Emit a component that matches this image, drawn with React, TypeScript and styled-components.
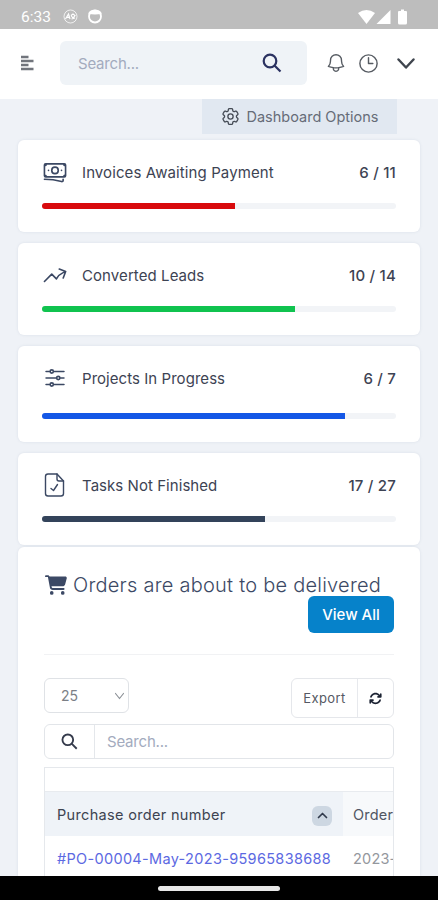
import React from "react";
import styled, { createGlobalStyle } from "styled-components";
import {
  HiOutlineBanknotes,
  HiOutlineArrowTrendingUp,
  HiOutlineAdjustmentsHorizontal,
  HiOutlineBell,
  HiOutlineClock,
  HiOutlineCog6Tooth,
} from "react-icons/hi2";
import { FaCartShopping, FaArrowsRotate } from "react-icons/fa6";

const GlobalStyle = createGlobalStyle`
  * { box-sizing: border-box; }
  body { margin: 0; background: #eff2f7; font-family: Inter, "Liberation Sans", sans-serif; }
  button, input { font-family: inherit; }
`;

const Screen = styled.div`
  width: 438px;
  height: 900px;
  overflow: hidden;
  display: flex;
  flex-direction: column;
  background: #eff2f7;
`;

const StatusBar = styled.div`
  height: 29px;
  flex: none;
  display: flex;
  align-items: center;
  padding: 4px 30px 0 21px;
  background: #bdbdbd;
  color: #fff;
`;

const Time = styled.span`
  font: 400 15.5px/20px Roboto, sans-serif;
  width: 42px;
`;

const StatusIcons = styled.div<{ $right?: boolean }>`
  display: flex;
  align-items: center;
  gap: ${(p) => (p.$right ? "0" : "9px")};
  margin-left: ${(p) => (p.$right ? "auto" : "0")};
  svg { display: block; }
`;

const Header = styled.header`
  height: 70px;
  flex: none;
  display: flex;
  align-items: center;
  padding: 0 23px 2px 20px;
  background: #fff;
  color: #565b62;
  svg { display: block; flex: none; }
`;

const HeaderSearch = styled.label`
  width: 247px;
  height: 44px;
  margin: 0 18px 0 26px;
  padding: 0 25px 0 18px;
  display: flex;
  align-items: center;
  border-radius: 6px;
  background: #eff3f7;
  color: #2b3261;
`;

const SearchInput = styled.input`
  flex: 1;
  min-width: 0;
  padding: 0;
  border: 0;
  outline: 0;
  background: transparent;
  font-size: 15px;
  letter-spacing: -0.2px;
  &::placeholder { color: #a3abbe; opacity: 1; }
`;

const HeaderActions = styled.div`
  display: flex;
  align-items: center;
  flex: 1;
  gap: 10px;
  svg:last-child { margin-left: auto; }
`;

const OptionsButton = styled.button`
  width: 195px;
  height: 35px;
  flex: none;
  align-self: flex-end;
  margin: 0 41px 6px 0;
  padding: 0;
  border: 0;
  display: flex;
  align-items: center;
  justify-content: center;
  gap: 5px;
  background: #e1e8f1;
  color: #666c78;
  font-size: 14.5px;
  letter-spacing: 0;
  svg { color: #454b55; }
`;

const Stats = styled.div`
  display: flex;
  flex-direction: column;
  gap: 11px;
  padding: 0 18px;
`;

const surface = `
  background: #fff;
  border-radius: 6px;
  box-shadow: 0 0 3px rgba(100, 116, 139, 0.14);
`;

const StatCard = styled.section<{ $tall?: boolean }>`
  ${surface}
  height: ${(p) => (p.$tall ? 96 : 92)}px;
  padding: 19px 24px 23px;
  display: flex;
  flex-direction: column;
  justify-content: space-between;
`;

const StatHead = styled.div`
  display: flex;
  align-items: center;
  height: 26px;
  color: #3d4353;
  font-size: 15px;
  svg { flex: none; display: block; color: #3b4863; }
`;

const StatLabel = styled.span<{ $spacing: number }>`
  margin-left: 14px;
  flex: 1;
  white-space: nowrap;
  letter-spacing: ${(p) => p.$spacing}px;
`;

const StatValue = styled.span`
  font-weight: 500;
  letter-spacing: 0.2px;
  font-size: 15px;
`;

const Track = styled.div`
  height: 6px;
  border-radius: 3px;
  overflow: hidden;
  background: #f2f4f7;
`;

const Fill = styled.div<{ $color: string }>`
  height: 100%;
  background: ${(p) => p.$color};
`;

const Panel = styled.section`
  ${surface}
  flex: 1;
  min-height: 0;
  overflow: hidden;
  margin: 2px 18px 0 18px;
  padding: 25px 26px 0 26px;
  border-radius: 6px 6px 0 0;
`;

const Title = styled.h2`
  height: 25px;
  margin: 0 0 0 1px;
  display: flex;
  align-items: center;
  gap: 6px;
  white-space: nowrap;
  color: #3c4965;
  font-size: 20px;
  font-weight: 300;
  letter-spacing: 0.24px;
`;

const TitleAction = styled.div`
  display: flex;
  justify-content: flex-end;
  height: 58px;
  border-bottom: 1px solid #f1f2f4;
`;

const PrimaryButton = styled.button`
  width: 86px;
  height: 37px;
  margin-top: -1px;
  padding: 0;
  border: 0;
  border-radius: 6px;
  background: #0682ca;
  color: #fff;
  font-size: 15px;
  font-weight: 500;
`;

const Controls = styled.div`
  display: flex;
  justify-content: space-between;
  align-items: flex-start;
  margin-top: 23px;
`;

const PageSize = styled.button`
  width: 85px;
  height: 35px;
  padding: 0 3px 0 16px;
  display: flex;
  align-items: center;
  justify-content: space-between;
  border: 1px solid #dfe2e6;
  border-radius: 6px;
  background: #fff;
  color: #7b7f86;
  font-size: 14px;
`;

const ButtonGroup = styled.div`
  width: 103px;
  height: 40px;
  display: flex;
  border: 1px solid #e5e7eb;
  border-radius: 6px;
`;

const GroupButton = styled.button<{ $divided?: boolean }>`
  flex: ${(p) => (p.$divided ? "0 0 36px" : "1")};
  padding: 0;
  display: flex;
  align-items: center;
  justify-content: center;
  border: 0;
  border-left: ${(p) => (p.$divided ? "1px solid #e7e9ed" : "0")};
  background: transparent;
  color: ${(p) => (p.$divided ? "#1c2333" : "#555963")};
  font-size: 13px;
  letter-spacing: 0.4px;
`;

const TableSearch = styled.label`
  height: 35px;
  margin-top: 6px;
  display: flex;
  align-items: center;
  border: 1px solid #e2e5e9;
  border-radius: 6px;
  color: #353b4c;
  overflow: hidden;
`;

const SearchAddon = styled.span`
  width: 50px;
  height: 100%;
  margin-right: 12px;
  display: flex;
  align-items: center;
  justify-content: center;
  border-right: 1px solid #e4e7eb;
`;

const Table = styled.div`
  width: 350px;
  margin-top: 8px;
  border: 1px solid #e5e8ec;
  overflow: hidden;
`;

const Row = styled.div<{ $head?: boolean }>`
  display: grid;
  grid-template-columns: 298px 50px;
  height: 45px;
  border-top: ${(p) => (p.$head ? "1px solid #e8ebef" : "0")};
  margin-top: ${(p) => (p.$head ? "23px" : "0")};
`;

const Cell = styled.div<{ $tone: "sorted" | "head" | "link" | "plain" }>`
  display: flex;
  align-items: center;
  justify-content: space-between;
  overflow: hidden;
  padding: 0 ${(p) => (p.$tone === "link" || p.$tone === "sorted" ? 11 : 0)}px 0 ${(p) => (p.$tone === "link" || p.$tone === "sorted" ? 12 : 10)}px;
  white-space: nowrap;
  background: ${(p) => ({ sorted: "#eff3f8", head: "#f7f9fb", link: "#fff", plain: "#fff" })[p.$tone]};
  color: ${(p) => ({ sorted: "#3d4351", head: "#505662", link: "#5c69e2", plain: "#94979d" })[p.$tone]};
  font-size: 14.5px;
  letter-spacing: ${(p) => (p.$tone === "link" ? 0.32 : p.$tone === "sorted" ? 0.33 : 0.2)}px;
`;

const SortBadge = styled.span`
  width: 20px;
  height: 20px;
  display: flex;
  align-items: center;
  justify-content: center;
  border-radius: 6px;
  background: #cdd7e2;
  margin-top: 3px;
`;

const NavBar = styled.div`
  height: 24px;
  flex: none;
  display: flex;
  justify-content: center;
  align-items: center;
  background: #000;
`;

const HomeHandle = styled.div`
  width: 122px;
  height: 5px;
  border-radius: 3px;
  background: #e8e8e8;
`;

const Chevron = ({ w, h, stroke, color, up }: { w: number; h: number; stroke: number; color: string; up?: boolean }) => (
  <svg width={w} height={h} viewBox={`0 0 ${w} ${h}`} fill="none" stroke={color} strokeWidth={stroke} strokeLinecap="round" strokeLinejoin="round">
    <path d={up ? `M1.5 ${h - 1.5}L${w / 2} 1.5L${w - 1.5} ${h - 1.5}` : `M1.5 1.5L${w / 2} ${h - 1.5}L${w - 1.5} 1.5`} />
  </svg>
);

const SearchIcon = ({ size, stroke }: { size: number; stroke: number }) => (
  <svg width={size} height={size} viewBox="0 0 20 20" fill="none" stroke="currentColor" strokeWidth={stroke}>
    <circle cx="8" cy="8" r="6.3" />
    <path d="M12.5 12.5L18.500 18.500" />
  </svg>
);

const DocumentCheck = () => (
  <svg width="26" height="26" viewBox="0 0 26 26" fill="none" stroke="currentColor" strokeWidth="1.4" strokeLinejoin="round" strokeLinecap="round">
    <path d="M15 2H6Q3.500 2 3.500 4.500V21.500Q3.500 24 6 24H19Q21.500 24 21.500 21.500V9Z" />
    <path d="M15 2V7Q15 9 17 9H21.500M9 16.500L11.500 18.500L15.500 12.500" />
  </svg>
);

const stats = [
  { label: "Invoices Awaiting Payment", spacing: 0.1, done: 6, total: 11, color: "#d80a0d", icon: <HiOutlineBanknotes size={26} /> },
  { label: "Converted Leads", spacing: 0.08, done: 10, total: 14, color: "#10c34f", icon: <HiOutlineArrowTrendingUp size={26} /> },
  { label: "Projects In Progress", spacing: 0.05, done: 6, total: 7, color: "#1457e6", icon: <HiOutlineAdjustmentsHorizontal size={26} /> },
  { label: "Tasks Not Finished", spacing: 0.05, done: 17, total: 27, color: "#33435a", icon: <DocumentCheck /> },
];

export default function App() {
  return (
    <>
      <GlobalStyle />
      <Screen>
        <StatusBar>
          <Time>6:33</Time>
          <StatusIcons>
            <svg width="15" height="15" viewBox="0 0 15 15" fill="none" stroke="#fff">
              <circle cx="7.500" cy="7.500" r="6.500" strokeWidth="1" opacity=".75" />
              <path d="M2.500 10L5.500 5L7 10M4 8.300H7M8 6.500L10 5L12 6.500L10 9L8 6.500M8.500 10L12 9" strokeWidth="1.200" />
            </svg>
            <svg width="16" height="15" viewBox="0 0 16 15" fill="none" stroke="#fff" strokeWidth="1.800">
              <circle cx="8" cy="7.500" r="6" />
              <path d="M1 4.500Q8 6.500 15 4.500L13 2Q8 -.5 3 2Z" fill="#fff" stroke="none" />
            </svg>
          </StatusIcons>
          <StatusIcons $right>
            <svg width="50" height="16" viewBox="0 0 50 16" fill="#fff">
              <path d="M0 4Q8.500 -2 17 4L8.500 15Z" />
              <path d="M32.500 1V15H18.500Z" />
              <path d="M41 2H43V.5H46V2H48Q49 2 49 3V14Q49 15.500 47.500 15.500H41.500Q40 15.500 40 14V3Q40 2 41 2Z" />
            </svg>
          </StatusIcons>
        </StatusBar>

        <Header>
          <svg width="14" height="16" viewBox="0 0 14 16" stroke="#71757c" strokeWidth="2.300">
            <path d="M1 2H8.500M1 6H13.500M1 10H8.500M1 14H13.500" />
          </svg>
          <HeaderSearch>
            <SearchInput placeholder="Search..." />
            <SearchIcon size={20} stroke={2.2} />
          </HeaderSearch>
          <HeaderActions>
            <HiOutlineBell size={22} />
            <HiOutlineClock size={23} />
            <Chevron w={18} h={11} stroke={2.4} color="#3f454e" />
          </HeaderActions>
        </Header>

        <OptionsButton>
          <HiOutlineCog6Tooth size={21} />
          Dashboard Options
        </OptionsButton>

        <Stats>
          {stats.map((s) => (
            <StatCard key={s.label} $tall={s.total === 7}>
              <StatHead>
                {s.icon}
                <StatLabel $spacing={s.spacing}>{s.label}</StatLabel>
                <StatValue>{s.done} / {s.total}</StatValue>
              </StatHead>
              <Track>
                <Fill $color={s.color} style={{ width: `${(s.done / s.total) * 100}%` }} />
              </Track>
            </StatCard>
          ))}
        </Stats>

        <Panel>
          <Title>
            <FaCartShopping size={22} />
            Orders are about to be delivered
          </Title>
          <TitleAction>
            <PrimaryButton>View All</PrimaryButton>
          </TitleAction>
          <Controls>
            <PageSize>
              25
              <Chevron w={11} h={8} stroke={1.2} color="#8c9197" />
            </PageSize>
            <ButtonGroup>
              <GroupButton>Export</GroupButton>
              <GroupButton $divided>
                <FaArrowsRotate size={13} />
              </GroupButton>
            </ButtonGroup>
          </Controls>
          <TableSearch>
            <SearchAddon>
              <SearchIcon size={17} stroke={2.2} />
            </SearchAddon>
            <SearchInput placeholder="Search..." />
          </TableSearch>
          <Table>
            <Row $head>
              <Cell $tone="sorted">
                Purchase order number
                <SortBadge>
                  <Chevron w={11} h={7} stroke={1.7} color="#30394b" up />
                </SortBadge>
              </Cell>
              <Cell $tone="head">Order</Cell>
            </Row>
            <Row>
              <Cell $tone="link">#PO-00004-May-2023-95965838688</Cell>
              <Cell $tone="plain">2023-</Cell>
            </Row>
          </Table>
        </Panel>

        <NavBar>
          <HomeHandle />
        </NavBar>
      </Screen>
    </>
  );
}
